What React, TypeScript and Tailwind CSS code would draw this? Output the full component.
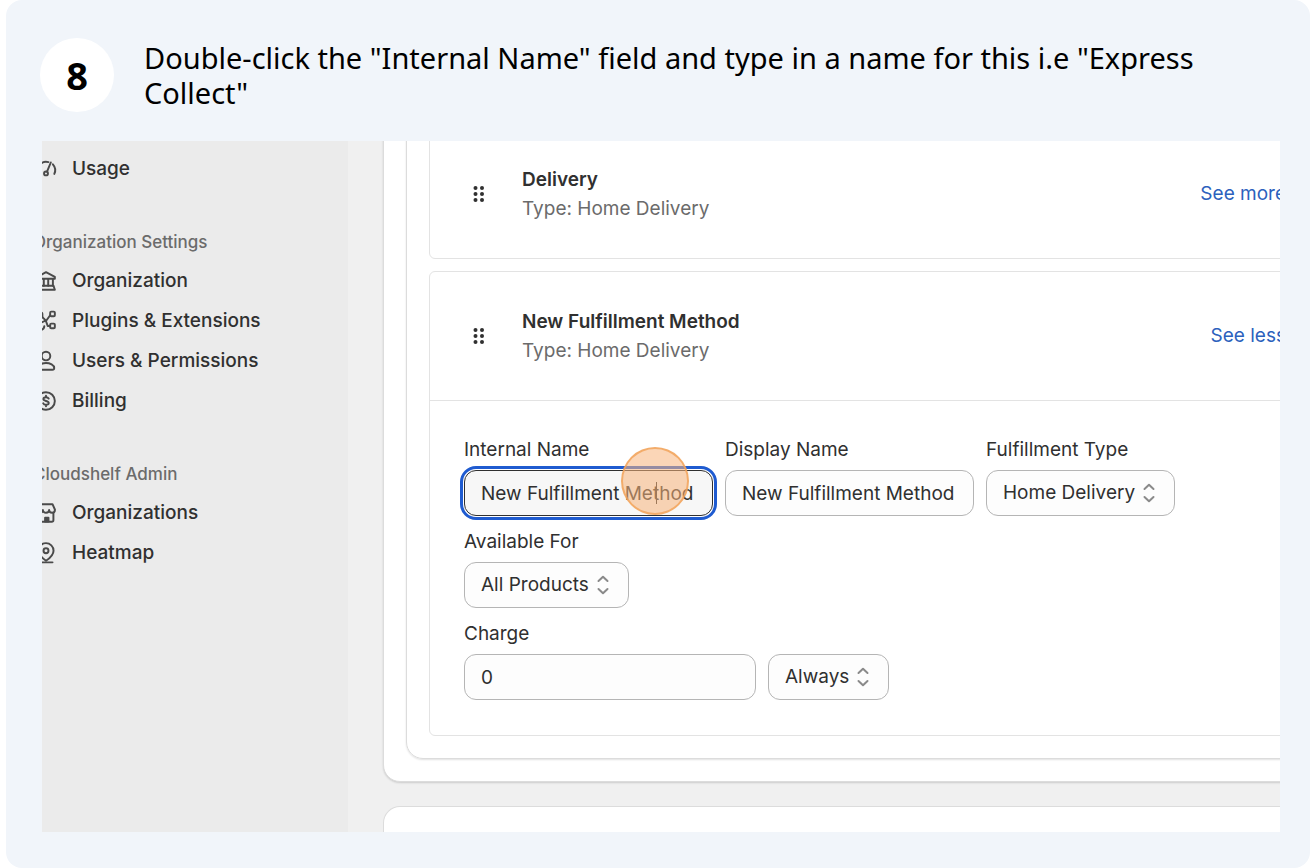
import { useState } from "react";
import type { ReactNode } from "react";

interface NavItem {
  label: string;
  icon: ReactNode;
}

interface NavSection {
  title?: string;
  items: NavItem[];
}

const sections: NavSection[] = [
  {
    items: [
      {
        label: "Usage",
        icon: (
          <>
            <path d="M3.6 13.6a6.900 6.900 0 0 1 8.300-8.900" />
            <path d="M15.300 6.400a6.900 6.900 0 0 1 1.100 7.400" />
            <path d="M13.700 5 10.800 12" />
            <circle cx="10" cy="13.4" r="1.5" />
          </>
        ),
      },
    ],
  },
  {
    title: "Organization Settings",
    items: [
      {
        label: "Organization",
        icon: (
          <>
            <path d="M3.2 8.2V6.800L10 3.200l6.800 3.600v1.400z" />
            <path d="M4.700 8.400v5.200M8.300 8.400v5.200M11.700 8.400v5.200M15.300 8.400v5.200" />
            <path d="M4.200 13.700h11.600l1 3H3.200z" />
          </>
        ),
      },
      {
        label: "Plugins & Extensions",
        icon: (
          <>
            <rect x="13.2" y="2.8" width="3.6" height="3.6" rx="0.8" />
            <rect x="13.2" y="12" width="3.6" height="3.6" rx="0.8" />
            <rect x="3.2" y="3.6" width="4" height="4" rx="0.8" />
            <path d="M13.2 5.600 10.400 9.400 5.500 11.600M9.800 9.600 7.200 7M13.200 13.800h-1.900L9.800 9.600M5.500 16.900c2 0 3-1 3.200-2.900" />
          </>
        ),
      },
      {
        label: "Users & Permissions",
        icon: (
          <>
            <circle cx="10" cy="6.200" r="3.300" />
            <path d="M3.700 15.400c0-2.400 3.200-3.900 6.300-3.900s6.300 1.500 6.300 3.900c0 .8-.6 1.400-1.300 1.400H5c-.7 0-1.300-.6-1.300-1.400z" />
          </>
        ),
      },
      {
        label: "Billing",
        icon: (
          <>
            <circle cx="10" cy="10" r="6.800" />
            <path d="M12 8.100c-.3-.6-1-1-2-1-1.100 0-2 .5-2 1.400 0 2 4.100.9 4.100 3 0 .9-.9 1.400-2.100 1.400-1 0-1.800-.4-2.100-1.100M10 5.900v1.200M10 12.900v1.200" />
          </>
        ),
      },
    ],
  },
  {
    title: "Cloudshelf Admin",
    items: [
      {
        label: "Organizations",
        icon: (
          <>
            <path d="M5 3.200h10l1.900 4.300c0 1.300-1 2.300-2.200 2.300s-2.300-.9-2.300-2.100c0 1.200-1.100 2.100-2.400 2.100s-2.400-.9-2.400-2.100c0 1.200-1.100 2.100-2.300 2.100s-2.200-1-2.200-2.300z" />
            <path d="M4.300 10v5.400c0 .8.500 1.400 1.300 1.400h8.800c.8 0 1.300-.6 1.300-1.400V10" />
            <path d="M9.300 16.600v-3h2.600v3z" fill="currentColor" />
          </>
        ),
      },
      {
        label: "Heatmap",
        icon: (
          <>
            <path d="M10 16c3.400-2.400 5.800-4.900 5.800-7.800a5.800 5.800 0 0 0-11.600 0c0 2.900 2.400 5.400 5.800 7.800z" />
            <circle cx="10" cy="8.300" r="1.900" />
            <path d="M5 17.200h10" />
          </>
        ),
      },
    ],
  },
];

function Sidebar() {
  return (
    <nav className="w-[306px] shrink-0 bg-[#ebebeb] pt-2">
      <div className="-ml-[9px] flex flex-col gap-[35px]">
        {sections.map((section, i) => (
          <div key={i}>
            {section.title && (
              <h2 className="flex h-[37px] items-center text-[17px] font-medium text-[#6b6b6b]">
                {section.title}
              </h2>
            )}
            <ul>
              {section.items.map((item) => (
                <li key={item.label}>
                  <a href="#" className="flex h-10 items-center gap-[13px] font-medium">
                    <svg
                      viewBox="0 0 20 20"
                      className="h-[26px] w-[26px] text-[#4a4a4a]"
                      fill="none"
                      stroke="currentColor"
                      strokeWidth="1.5"
                      strokeLinecap="round"
                      strokeLinejoin="round"
                    >
                      {item.icon}
                    </svg>
                    {item.label}
                  </a>
                </li>
              ))}
            </ul>
          </div>
        ))}
      </div>
    </nav>
  );
}

function DragHandle() {
  return (
    <svg viewBox="0 0 12 18" className="h-[18px] w-3" fill="#303030">
      {[3, 9, 15].map((y) => (
        <g key={y}>
          <circle cx="2.5" cy={y} r="2" />
          <circle cx="9" cy={y} r="2" />
        </g>
      ))}
    </svg>
  );
}

interface MethodHeaderProps {
  name: string;
  type: string;
  action: string;
}

function MethodHeader({ name, type, action }: MethodHeaderProps) {
  return (
    <div className="flex h-32 items-center pr-[17px] pl-[43px]">
      <DragHandle />
      <div className="ml-[37px] flex-1 leading-[29px]">
        <h3 className="font-semibold">{name}</h3>
        <p className="text-[#6b6b6b]">Type: {type}</p>
      </div>
      <button type="button" className="text-[#2c61bd]">
        {action}
      </button>
    </div>
  );
}

interface SelectFieldProps {
  id: string;
  label?: string;
  options: string[];
  width: string;
}

function SelectField({ id, label, options, width }: SelectFieldProps) {
  return (
    <div className="flex flex-col gap-[6px]">
      {label && (
        <label htmlFor={id} className="leading-7">
          {label}
        </label>
      )}
      <div className={`relative ${width}`}>
        <select
          id={id}
          aria-label={label ?? id}
          className="h-[46px] w-full appearance-none rounded-xl border border-[#b5b5b5] bg-[#fdfdfd] pl-4"
        >
          {options.map((option) => (
            <option key={option}>{option}</option>
          ))}
        </select>
        <svg
          viewBox="0 0 12 20"
          className="pointer-events-none absolute top-[13px] right-5 h-5 w-3"
          fill="none"
          stroke="#8a8a8a"
          strokeWidth="2"
          strokeLinecap="round"
          strokeLinejoin="round"
        >
          <path d="M1.500 6 6 1.800 10.500 6M1.500 14 6 18.200 10.500 14" />
        </svg>
      </div>
    </div>
  );
}

function MethodForm() {
  const [internalName, setInternalName] = useState("New Fulfillment Method");
  const [displayName, setDisplayName] = useState("New Fulfillment Method");
  const [charge, setCharge] = useState("0");

  return (
    <form className="flex flex-col gap-3 border-t border-[#e3e3e3] px-[34px] py-[35px]">
      <div className="flex gap-3">
        <div className="flex flex-col gap-[6px]">
          <label htmlFor="internal-name" className="leading-7">
            Internal Name
          </label>
          <div className="relative w-[249px]">
            <input
              id="internal-name"
              type="text"
              value={internalName}
              onChange={(e) => setInternalName(e.target.value)}
              className="h-[46px] w-full rounded-xl border border-[#303030] bg-[#f7f7f7] px-4 outline-3 outline-offset-1 outline-[#1f5bd0]"
            />
            <span className="absolute top-3 left-48 h-[22px] w-px bg-[#303030]" />
            {/* click marker */}
            <span className="pointer-events-none absolute -top-[23px] left-[157px] size-[68px] rounded-full border-2 border-[#f1a157]/80 bg-[#f8b47b]/55" />
          </div>
        </div>
        <div className="flex flex-col gap-[6px]">
          <label htmlFor="display-name" className="leading-7">
            Display Name
          </label>
          <input
            id="display-name"
            type="text"
            value={displayName}
            onChange={(e) => setDisplayName(e.target.value)}
            className="h-[46px] w-[249px] rounded-xl border border-[#b5b5b5] bg-[#fdfdfd] px-4"
          />
        </div>
        <SelectField
          id="fulfillment-type"
          label="Fulfillment Type"
          options={["Home Delivery", "Store Collection"]}
          width="w-[189px]"
        />
      </div>

      <SelectField
        id="available-for"
        label="Available For"
        options={["All Products"]}
        width="w-[165px]"
      />

      <div className="flex items-end gap-3">
        <div className="flex flex-col gap-[6px]">
          <label htmlFor="charge" className="leading-7">
            Charge
          </label>
          <input
            id="charge"
            type="text"
            value={charge}
            onChange={(e) => setCharge(e.target.value)}
            className="h-[46px] w-[292px] rounded-xl border border-[#b5b5b5] bg-[#fdfdfd] px-4"
          />
        </div>
        <SelectField id="charge-when" options={["Always"]} width="w-[121px]" />
      </div>
    </form>
  );
}

export default function App() {
  return (
    <div className="bg-white pl-[6px] font-['Noto_Sans',sans-serif] text-black">
      <section className="rounded-2xl bg-[#f1f5fa] pt-[38px] pr-[30px] pb-9">
        <header className="flex items-center gap-[30px] pl-[34px]">
          <div className="flex size-[74px] shrink-0 items-center justify-center rounded-full bg-white text-[38px] font-bold">
            8
          </div>
          <h1 className="text-[29px] leading-[35px]">
            Double-click the "Internal Name" field and type in a name for this i.e "Express Collect"
          </h1>
        </header>

        <div className="mt-[29px] ml-9 flex overflow-hidden bg-[#f0f0f0] font-[Inter,sans-serif] text-[19px] text-[#303030]">
          <Sidebar />
          <main className="-mr-[70px] min-w-0 flex-1 pl-[35px]">
            <div className="-mt-[58px] rounded-[17px] border border-[#dcdcdc] bg-white p-[22px] shadow-[0_1px_2px_rgba(0,0,0,0.15)]">
              <div className="rounded-[17px] border border-[#dcdcdc] p-[22px] shadow-[0_1px_2px_rgba(0,0,0,0.12)]">
                <div className="flex flex-col gap-3">
                  <div className="rounded-md border border-[#e3e3e3]">
                    <MethodHeader name="Delivery" type="Home Delivery" action="See more" />
                  </div>
                  <div className="rounded-md border border-[#e3e3e3]">
                    <MethodHeader
                      name="New Fulfillment Method"
                      type="Home Delivery"
                      action="See less"
                    />
                    <MethodForm />
                  </div>
                </div>
              </div>
            </div>
            <div className="mt-6 h-[26px] rounded-t-[17px] border border-b-0 border-[#dcdcdc] bg-white" />
          </main>
        </div>
      </section>
    </div>
  );
}
